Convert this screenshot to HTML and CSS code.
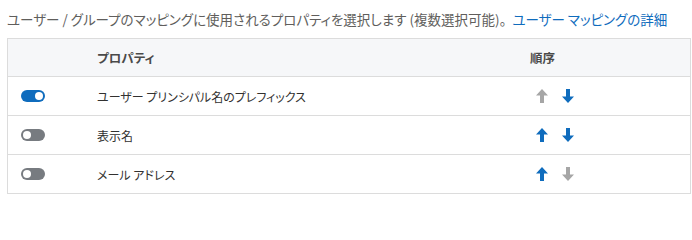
FILE: index.html
```html
<!DOCTYPE html>
<html lang="ja">
<head>
<meta charset="utf-8">
<link rel="stylesheet" href="styles.css">
</head>
<body>
<div class="page">
  <p class="desc">ユーザー / グループのマッピングに使用されるプロパティを選択します (複数選択可能)。<a class="link" href="#">ユーザー マッピングの詳細</a></p>
  <div class="table">
    <div class="row head">
      <div class="c-toggle"></div>
      <div class="c-name">プロパティ</div>
      <div class="c-order">順序</div>
    </div>
    <div class="row">
      <div class="c-toggle"><span class="toggle on"><span class="knob"></span></span></div>
      <div class="c-name">ユーザー プリンシパル名のプレフィックス</div>
      <div class="c-order">
        <span class="arrow disabled"><svg viewBox="0 0 16 16"><path d="M8 1 L14 7.5 H10 V15 H6 V7.5 H2 Z"/></svg></span>
        <span class="arrow"><svg viewBox="0 0 16 16"><path d="M8 15 L14 8.5 H10 V1 H6 V8.5 H2 Z"/></svg></span>
      </div>
    </div>
    <div class="row">
      <div class="c-toggle"><span class="toggle"><span class="knob"></span></span></div>
      <div class="c-name">表示名</div>
      <div class="c-order">
        <span class="arrow"><svg viewBox="0 0 16 16"><path d="M8 1 L14 7.5 H10 V15 H6 V7.5 H2 Z"/></svg></span>
        <span class="arrow"><svg viewBox="0 0 16 16"><path d="M8 15 L14 8.5 H10 V1 H6 V8.5 H2 Z"/></svg></span>
      </div>
    </div>
    <div class="row">
      <div class="c-toggle"><span class="toggle"><span class="knob"></span></span></div>
      <div class="c-name">メール アドレス</div>
      <div class="c-order">
        <span class="arrow"><svg viewBox="0 0 16 16"><path d="M8 1 L14 7.5 H10 V15 H6 V7.5 H2 Z"/></svg></span>
        <span class="arrow disabled"><svg viewBox="0 0 16 16"><path d="M8 15 L14 8.5 H10 V1 H6 V8.5 H2 Z"/></svg></span>
      </div>
    </div>
  </div>
</div>
</body>
</html>
```

FILE: styles.css
```css
html, body {
  margin: 0;
  padding: 0;
  background: #ffffff;
}
body {
  font-family: "Noto Sans CJK JP", "Noto Sans", sans-serif;
  font-feature-settings: "palt";
  font-size: 12px;
  color: #323130;
}
.page {
  padding: 6px 1px 0 7px;
}
.desc {
  margin: 0;
  height: 32px;
  line-height: 27px;
  font-size: 13.5px;
  color: #605e5c;
  white-space: nowrap;
}
.link {
  margin-left: 6px;
  color: #0f6cbd;
  text-decoration: none;
}
.table {
  border: 1px solid #dcdcdc;
  width: 682px;
}
.row {
  display: grid;
  grid-template-columns: 89px 433px 1fr;
  height: 38px;
  align-items: center;
  border-top: 1px solid #dcdcdc;
}
.row:first-child {
  border-top: none;
  height: 37px;
}
.head {
  background: #f6f7f9;
  font-weight: 700;
  font-size: 12.5px;
  color: #4a4a4a;
}
.c-toggle {
  padding-left: 13px;
  display: flex;
  align-items: center;
}
.toggle {
  position: relative;
  display: inline-block;
  width: 24px;
  height: 12px;
  border-radius: 6px;
  background: #777b80;
}
.toggle .knob {
  position: absolute;
  top: 2px;
  left: 2px;
  width: 8px;
  height: 8px;
  border-radius: 50%;
  background: #ffffff;
}
.toggle.on {
  background: #0f6cbd;
}
.toggle.on .knob {
  left: auto;
  right: 2px;
}
.c-order {
  display: flex;
  align-items: center;
  gap: 2px;
}
.head .c-order {
  display: block;
}
.arrow {
  display: inline-flex;
  width: 24px;
  height: 24px;
  align-items: center;
  justify-content: center;
}
.arrow svg {
  width: 16px;
  height: 16px;
  fill: #0f6cbd;
}
.arrow.disabled svg {
  fill: #a6a6a6;
}
```
